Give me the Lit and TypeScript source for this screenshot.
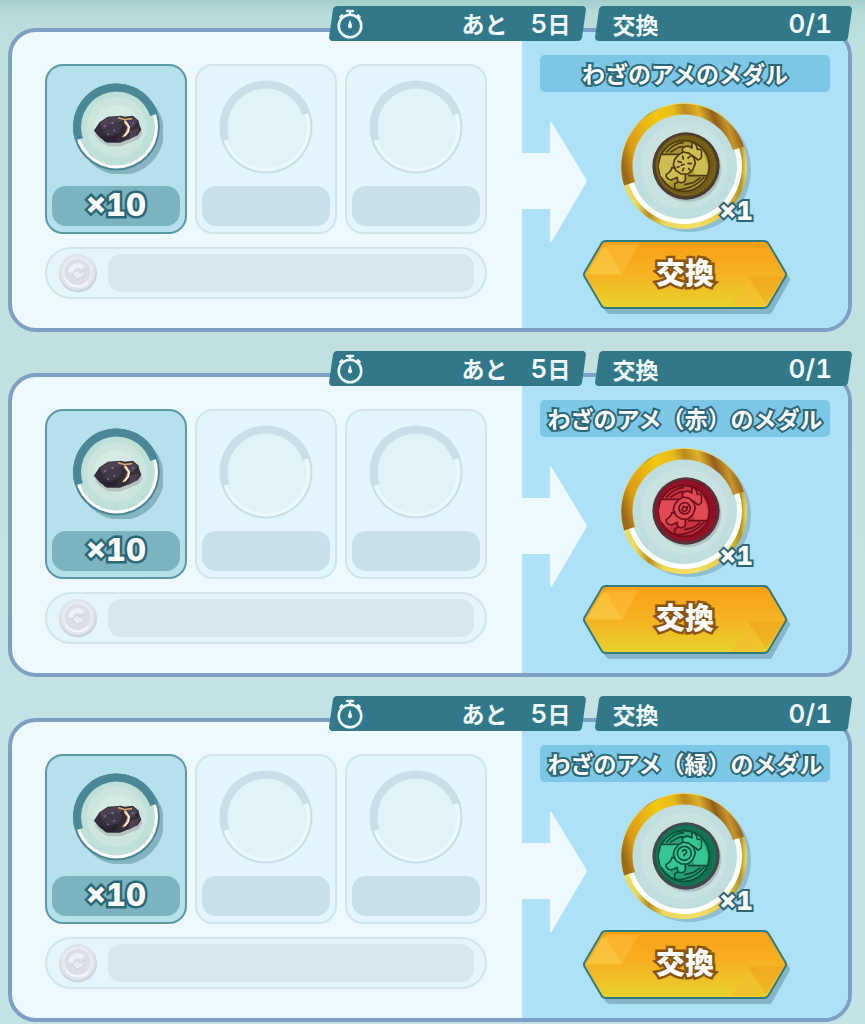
import { LitElement, html, svg, css } from "lit";
import { customElement, property } from "lit/decorators.js";

interface Offer {
  title: string;
  tone: "gold" | "red" | "green";
  cost: number;
  days: number;
  done: number;
  limit: number;
}

const OFFERS: Offer[] = [
  { title: "わざのアメのメダル", tone: "gold", cost: 10, days: 5, done: 0, limit: 1 },
  { title: "わざのアメ（赤）のメダル", tone: "red", cost: 10, days: 5, done: 0, limit: 1 },
  { title: "わざのアメ（緑）のメダル", tone: "green", cost: 10, days: 5, done: 0, limit: 1 },
];

const TONES = {
  gold: { edge: "#4b3b30", rim: "#6f5a16", rimLight: "#7d6a1c", face: "#a99832", light: "#cdbd52", line: "#4c3c10" },
  red: { edge: "#57303a", rim: "#8f0f22", rimLight: "#9d1528", face: "#c8333e", light: "#e04b53", line: "#6d0f1d" },
  green: { edge: "#45454d", rim: "#11704f", rimLight: "#177a58", face: "#25a277", light: "#35c596", line: "#0d4f3b" },
};

const stopwatch = html`<svg class="watch" viewBox="0 0 28 30" aria-hidden="true">
  <g fill="none" stroke="#eefbff" stroke-width="2.6" stroke-linecap="round">
    <circle cx="14" cy="17" r="11.3" />
    <path d="M11 2h6M14 2v4M22 6.500l1.500 1.500M6 6.500l-1.500 1.500" />
  </g>
  <path d="M14 10.500l2 6a2.100 2.100 0 1 1-4 0z" fill="#eefbff" />
</svg>`;

const silverCoin = html`<svg class="silver" viewBox="0 0 40 40" aria-hidden="true">
  <circle cx="20" cy="20.500" r="19" fill="#cdd3dd" />
  <circle cx="19.500" cy="19" r="18" fill="#e0e4eb" />
  <circle cx="19.500" cy="19" r="14" fill="#dadee7" stroke="#eaeef4" stroke-width="2" />
  <path d="M10 19a10 10 0 0 1 17-6l-4 3a5 5 0 0 0-8 4z" fill="#eef2f7" />
  <path d="M14 21l5-4 3 3 5-3-2 7-6 2z" fill="#e8ebf2" stroke="#ced3de" />
  <path d="M8 27a14 14 0 0 0 22 2" fill="none" stroke="#f4f7fa" stroke-width="2" />
</svg>`;

const ore = svg`<g transform="translate(3.500 6) scale(0.930)">
  <path d="M23 50l6-11 9-6 14-1 4 1 9-1 6 5 1 5 2 6-4 6-9 4-10 4-14 0-8-5z" fill="#8d8a91" opacity=".4" transform="translate(1 3)" />
  <path d="M23 48l6-9 9-6 14-1 4 1 9-1 6 5 1 5 2 5-4 6-9 4-10 4-14 0-8-6z" fill="#352c3a" />
  <path d="M29 40l9-6 13-1 3 5-9 4-12 5z" fill="#4c4254" />
  <path d="M38 42l9-3 7 2-4 9-9 3-8-3z" fill="#41384a" />
  <path d="M57 36l8-3 5 4-4 7-7 2z" fill="#4a4053" />
  <path d="M26 49l6 5 8 1 10-4-4 9-11 0z" fill="#292330" />
  <path d="M62 48l10-3-3 8-9 5z" fill="#503e50" />
  <g fill="#837990"><circle cx="35" cy="43" r="1" /><circle cx="43" cy="40" r="1.200" /><circle cx="45" cy="48" r="1" /><circle cx="38" cy="52" r="1" /><circle cx="65" cy="40" r="1" /></g>
  <path d="M49 34l7 2 8-1M57 36l-1 3 4 5-2 6-4 5" fill="none" stroke="#d7aa6d" stroke-width="1.800" stroke-linejoin="round" />
  <path d="M57 38l4 6-1 5-4 5" fill="none" stroke="#fff3dc" stroke-width="1.800" />
</g>`;

/* Ring around an ingredient; its thick half covers the upper left. */
function ring(filled: boolean) {
  return filled
    ? html`<svg class="ring" viewBox="0 0 94 94" aria-hidden="true">
        <circle cx="52" cy="52" r="43" fill="#86b3c0" />
        <circle cx="47.500" cy="47" r="43.500" fill="#4b8797" />
        <circle cx="47.500" cy="47" r="41.500" fill="#fff" />
        <circle cx="47.500" cy="47" r="38.500" fill="#bfdfd9" />
        <path d="M6.100 60.400A43.500 43.500 0 0 1 88.900 33.600z" fill="#4b8797" />
        <circle cx="47.500" cy="47" r="35.500" fill="#bfdfd9" />
        <circle cx="47.500" cy="47" r="30" fill="#cbe5de" />
        <circle cx="47.500" cy="47" r="22" fill="#d5ebe2" />
        ${ore}
      </svg>`
    : html`<svg class="ring" viewBox="0 0 94 94" aria-hidden="true">
        <circle cx="47" cy="47" r="46.500" fill="#c8dfe7" />
        <circle cx="47" cy="47" r="44.500" fill="#ecf9fc" />
        <circle cx="47" cy="47" r="41" fill="#e0f3f7" />
        <path d="M2.800 61.400A46.500 46.500 0 0 1 91.200 32.600z" fill="#c8dfe7" />
        <circle cx="47" cy="47" r="38.500" fill="#e0f3f7" />
        <circle cx="47" cy="47" r="30" fill="#e0f3f5" />
      </svg>`;
}

function medal(tone: Offer["tone"]) {
  const t = TONES[tone];
  const mark = {
    gold: svg`<path d="M-24-14l10 3M-10-30l2 9M6-24l6-5M-14-2l8-3M6-8l10 1M-10 14l3-7M8 8l4 4M-26 4l5-2" />`,
    red: svg`<circle cx="-4" cy="-8" r="17" /><path d="M-12-4l4-10 8 4 5-4-3 12-9 4z" />`,
    green: svg`<circle cx="-5" cy="-8" r="21" /><path d="M-10-14a6 6 0 1 1 8 7l-4 4v2" />`,
  }[tone];
  return html`<svg class="disc" viewBox="0 0 128 128" aria-hidden="true">
    <defs>
      <linearGradient id="arc" x1="0" y1="83" x2="124" y2="44" gradientUnits="userSpaceOnUse">
        <stop offset="0" stop-color="#9b6b1c" />
        <stop offset="0.060" stop-color="#9c6a16" />
        <stop offset="0.160" stop-color="#d99d15" />
        <stop offset="0.250" stop-color="#e3ab14" />
        <stop offset="0.420" stop-color="#f3c80f" />
        <stop offset="0.560" stop-color="#e6ba1c" />
        <stop offset="0.640" stop-color="#ba8a1e" />
        <stop offset="0.740" stop-color="#dfb029" />
        <stop offset="0.840" stop-color="#8f5f1e" />
        <stop offset="0.920" stop-color="#c8952b" />
        <stop offset="1" stop-color="#8c5a1d" />
      </linearGradient>
      <linearGradient id="lower" x1="0" y1="0.500" x2="1" y2="0.500">
        <stop offset="0" stop-color="#f0dc59" />
        <stop offset="0.120" stop-color="#efd95a" />
        <stop offset="0.220" stop-color="#b88f1c" />
        <stop offset="0.340" stop-color="#efd95a" />
        <stop offset="0.600" stop-color="#f4e06a" />
        <stop offset="0.850" stop-color="#e3c63e" />
        <stop offset="0.950" stop-color="#b69222" />
        <stop offset="1" stop-color="#f2e05f" />
      </linearGradient>
    </defs>
    <circle cx="68" cy="68" r="62" fill="#8fbdd2" />
    <circle cx="63" cy="64" r="63" fill="url(#lower)" />
    <circle cx="63" cy="64" r="58" fill="#fff" />
    <circle cx="63" cy="64" r="53" fill="#c0dedd" />
    <path d="M3.100 83.500A63 63 0 0 1 122.900 44.500z" fill="url(#arc)" />
    <circle cx="63" cy="64" r="51.500" fill="#c0dedd" />
    <circle cx="63" cy="64" r="43" fill="#c8e3df" />
    <g transform="translate(65 64) scale(0.333)">
      <circle cx="6" cy="8" r="100" fill="#9daab0" opacity=".6" />
      <circle r="101" fill="${t.edge}" />
      <circle cy="-1" r="92" fill="${t.rim}" />
      <circle r="86" fill="none" stroke="${t.rimLight}" stroke-width="6" stroke-dasharray="6 5" />
      <g stroke="${t.line}" stroke-width="5" stroke-linejoin="round" stroke-linecap="round" fill="none">
        <circle cx="-6" r="76" fill="${t.face}" />
        <path d="M-73-34H-12L30 29H62L66 0 50-48 22-68V-50L-10-36-30 0-50 50-76 30-82 0z" fill="${t.light}" stroke="none" />
        <path d="M-14-35H-72M8 29H63M-58-42Q-36-68-8-70M-46-42L-22-56-10-58M54 34Q30 62-2 68M42 36L22 50-4 56M-34 68V54L-20 46M-34 68Q-20 74-2 68" />
        <path d="M8-34Q-16-40-10-54 4-66 18-54L18-72Q32-68 34-50 52-52 46-36 50-22 36-18L22-30z" fill="${t.light}" />
        <path d="M-28 8L-42 4Q-44 16-60 26-60 40-44 42L-26 34Q-28 48-16 50-2 50-2 38L-2 20z" fill="${t.light}" />
        <path d="M-22-34L-8-42 10-38 24-24 28-8 20 12 6 24-14 24-30 14-38-4-34-20z" fill="${t.light}" />
        ${mark}
      </g>
    </g>
  </svg>`;
}

const plate = html`<svg class="plate" viewBox="0 0 206 70" aria-hidden="true">
  <defs>
    <linearGradient id="amber" x1="0" y1="0" x2="0" y2="1">
      <stop offset="0" stop-color="#fb9f17" />
      <stop offset="0.500" stop-color="#f5b222" />
      <stop offset="1" stop-color="#e7d32d" />
    </linearGradient>
  </defs>
  <path d="M6 40L26 6H190L210 40 192 72Q191 75 188 75H27Q24 75 22 72z" fill="#86b4c9" />
  <path d="M1 37Q0 35 1 33L18 4Q19 1 23 1H183Q186 1 188 4L205 33Q206 35 205 37L188 66Q186 69 183 69H23Q19 69 18 66z" fill="url(#amber)" stroke="#337a7c" stroke-width="2" />
  <path d="M3 35H39L23 7 19 8z" fill="#fbd04c" opacity=".6" />
  <path d="M22 5H56L39 35z" fill="#fdc448" opacity=".45" />
  <path d="M167 37H203L185 65z" fill="#f0a31f" opacity=".55" />
  <path d="M167 39L183 67H150z" fill="#f5bb32" opacity=".6" />
</svg>`;

@customElement("exchange-offer")
class ExchangeOffer extends LitElement {
  @property({ attribute: false }) offer!: Offer;

  static styles = css`
    :host {
      display: block;
    }
    .tags {
      display: flex;
      justify-content: flex-end;
      gap: 14px;
      padding-right: 2px;
      margin-bottom: -13px;
      position: relative;
      z-index: 1;
    }
    .tag {
      position: relative;
      box-sizing: border-box;
      width: 30%;
      height: 35px;
      padding: 0 18px 0 15px;
      display: flex;
      align-items: center;
      justify-content: space-between;
      color: #f2fcff;
      font-size: 23px;
      font-weight: 700;
      line-height: 34px;
      white-space: nowrap;
    }
    .tag::before {
      content: "";
      position: absolute;
      inset: 0;
      z-index: -1;
      border-radius: 4px;
      background: #31788b;
      transform: skewX(-8deg);
    }
    .timer {
      padding: 0 13px 0 5px;
    }
    .digits {
      font-family: "Inter", sans-serif;
      font-size: 26px;
      font-weight: 600;
      font-variant-numeric: tabular-nums;
    }
    .watch {
      width: 28px;
      height: 30px;
    }
    .card {
      display: grid;
      grid-template-columns: 510fr 326fr;
      border: 4px solid #7d9fc5;
      border-radius: 28px;
      background: #eef9ff;
      overflow: hidden;
    }
    .costs {
      padding: 32px 35px 29px 33px;
    }
    .slots {
      display: grid;
      grid-template-columns: repeat(3, 1fr);
      gap: 8px;
      margin: 0 0 13px;
      padding: 0;
      list-style: none;
    }
    .slot {
      display: flex;
      flex-direction: column;
      align-items: center;
      gap: 12px;
      padding: 14px 5px 6px;
      border: 2px solid #d3e5ec;
      border-radius: 18px;
      background: #e3f5fe;
    }
    .slot.filled {
      border-color: #5c99a6;
      background: #b6e1ec;
    }
    .ring {
      width: 94px;
      height: 94px;
    }
    .amount {
      width: 100%;
      height: 40px;
      border-radius: 14px;
      background: #c8e0e9;
      text-align: center;
      font-size: 31px;
      line-height: 38px;
    }
    .filled .amount {
      background: #7cb3c1;
    }
    .count {
      font-family: "Inter", sans-serif;
      font-weight: 800;
      font-variant-numeric: tabular-nums;
      color: #fff;
      -webkit-text-stroke: 5px #2c6777;
      paint-order: stroke fill;
    }
    .purse {
      display: flex;
      align-items: center;
      gap: 10px;
      padding: 5px 11px;
      border: 2px solid #d3e5ec;
      border-radius: 26px;
      background: #e5f5fd;
    }
    .silver {
      width: 40px;
      height: 40px;
      margin: -1px 0;
    }
    .price {
      flex: 1;
      height: 38px;
      border-radius: 13px;
      background: #d5e8ee;
    }
    .reward {
      position: relative;
      display: flex;
      flex-direction: column;
      align-items: center;
      gap: 10px;
      padding: 23px 18px 19px;
      background: #ade1f7;
    }
    .arrow {
      position: absolute;
      left: 0;
      top: 89px;
      width: 66px;
      height: 122px;
    }
    .title {
      align-self: stretch;
      margin: 0;
      height: 37px;
      border-radius: 5px;
      background: #7bc7e5;
      color: #fff;
      text-align: center;
      font-size: 23px;
      font-weight: 700;
      line-height: 37px;
      white-space: nowrap;
      -webkit-text-stroke: 4px #2c6777;
      paint-order: stroke fill;
    }
    .medal {
      position: relative;
      width: 128px;
      height: 128px;
    }
    .disc {
      display: block;
      width: 128px;
      height: 128px;
      overflow: visible;
    }
    .medal .count {
      position: absolute;
      right: -4px;
      bottom: 4px;
      font-size: 26px;
      line-height: 30px;
      -webkit-text-stroke-width: 4px;
    }
    .trade {
      display: grid;
      justify-items: center;
      align-items: start;
      padding: 0;
      border: 0;
      background: none;
      cursor: pointer;
      font: inherit;
    }
    .plate,
    .trade-text {
      grid-area: 1 / 1;
    }
    .plate {
      width: 206px;
      height: 69px;
      overflow: visible;
    }
    .trade-text {
      color: #fff;
      font-size: 29px;
      font-weight: 900;
      line-height: 62px;
      -webkit-text-stroke: 5px #8a5512;
      paint-order: stroke fill;
    }
  `;

  render() {
    const o = this.offer;
    return html`
      <article>
        <header class="tags">
          <div class="tag timer">
            ${stopwatch}
            <span>あと　<span class="digits">${o.days}</span>日</span>
          </div>
          <div class="tag">
            <span>交換</span><span class="digits">${o.done}/${o.limit}</span>
          </div>
        </header>
        <div class="card">
          <section class="costs">
            <ul class="slots">
              <li class="slot filled">
                ${ring(true)}
                <div class="amount count">×${o.cost}</div>
              </li>
              <li class="slot">${ring(false)}<div class="amount"></div></li>
              <li class="slot">${ring(false)}<div class="amount"></div></li>
            </ul>
            <div class="purse">${silverCoin}<div class="price"></div></div>
          </section>
          <section class="reward">
            <svg class="arrow" viewBox="0 0 66 122" aria-hidden="true">
              <path d="M0 32H28V2Q28-1 30 2L64 58Q65 60 64 62L30 120Q28 123 28 119V88H0z" fill="#eef9ff" />
            </svg>
            <h2 class="title">${o.title}</h2>
            <div class="medal">${medal(o.tone)}<span class="count">×1</span></div>
            <button class="trade" type="button">
              ${plate}<span class="trade-text">交換</span>
            </button>
          </section>
        </div>
      </article>
    `;
  }
}

@customElement("app-root")
class AppRoot extends LitElement {
  static styles = css`
    :host {
      display: block;
      box-sizing: border-box;
      min-height: 100vh;
      padding: 6px 13px 2px 8px;
      font-family: "Noto Sans CJK JP", sans-serif;
      background: linear-gradient(#a5cdcb, #b8dcda 14px, #bddfdd 40px, #c2e2e2 50%, #c4e3e6);
    }
    .list {
      display: grid;
      gap: 19px;
    }
  `;

  render() {
    return html`<main class="list">
      ${OFFERS.map((o) => html`<exchange-offer .offer=${o}></exchange-offer>`)}
    </main>`;
  }
}
